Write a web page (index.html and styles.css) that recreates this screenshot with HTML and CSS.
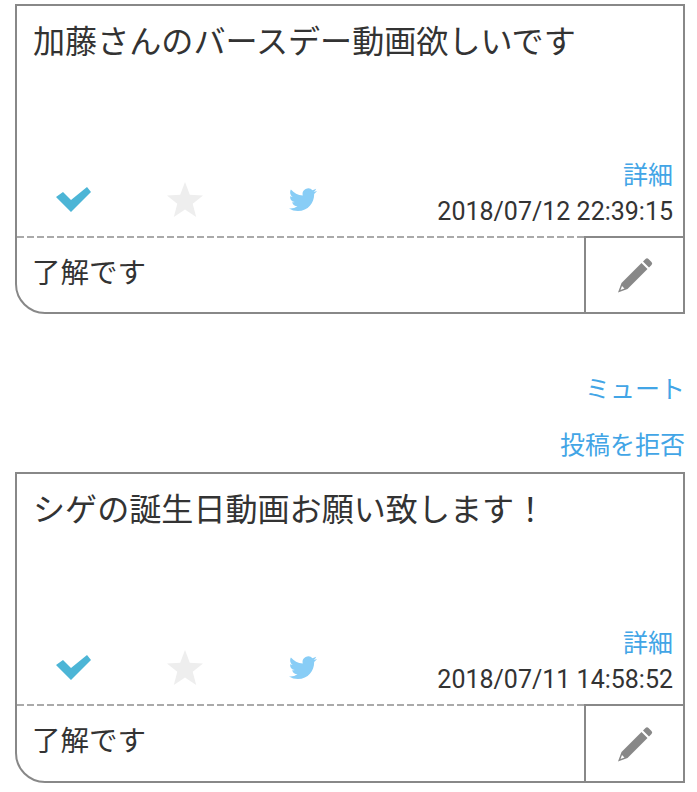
FILE: index.html
```html
<!DOCTYPE html>
<html lang="ja">
<head>
  <meta charset="UTF-8" />
  <meta name="viewport" content="width=device-width, initial-scale=1.0"/>
  <title>リクエスト一覧</title>
  <link rel="stylesheet" href="styles.css">
</head>
<body>
  <div class="card">
    <div class="card-main">
      <p class="message">加藤さんのバースデー動画欲しいです</p>
      <div class="meta">
        <div class="icons">
          <span class="icon-cell">
            <svg width="35" height="25" viewBox="0 0 35 25"><path class="check" d="M0 10 L7 5 L15 13 L31 0 L35 5 L15 25 Z"/></svg>
          </span>
          <span class="icon-cell">
            <svg width="36" height="35" viewBox="0 0 36 35"><path class="star" d="M18 0 L22.800 12.700 L36 13.400 L25.700 21.800 L29.200 35 L18 27.600 L6.800 35 L10.300 21.800 L0 13.400 L13.200 12.700 Z"/></svg>
          </span>
          <span class="icon-cell">
            <svg width="28" height="24" viewBox="0 0 24 20.500"><path class="bird" d="M23.953 2.570a10 10 0 0 1-2.825.775 4.958 4.958 0 0 0 2.163-2.723c-.951.555-2.005.959-3.127 1.184a4.920 4.920 0 0 0-8.384 4.482C7.690 6.095 4.067 4.130 1.640 1.162a4.822 4.822 0 0 0-.666 2.475c0 1.710.870 3.213 2.188 4.096a4.904 4.904 0 0 1-2.228-.616v.060a4.923 4.923 0 0 0 3.946 4.827 4.996 4.996 0 0 1-2.212.085 4.936 4.936 0 0 0 4.604 3.417 9.867 9.867 0 0 1-6.102 2.105c-.390 0-.779-.023-1.170-.067a13.995 13.995 0 0 0 7.557 2.209c9.053 0 13.998-7.496 13.998-13.985 0-.210 0-.420-.015-.630A9.935 9.935 0 0 0 24 2.590z"/></svg>
          </span>
        </div>
        <div class="info">
          <a class="detail" href="#">詳細</a>
          <span class="date">2018/07/12 22:39:15</span>
        </div>
      </div>
    </div>
    <div class="card-foot">
      <div class="reply">了解です</div>
      <div class="edit">
        <svg width="36" height="36" viewBox="0 0 36 36"><path class="pencil" fill-rule="evenodd" d="M26 4.500 L28.500 2 Q30 .500 31.500 2 L34.500 5 Q36 6.500 34.500 8 L32 10.500 Z M24.500 6 L30.500 12 L10.500 32 L1 35.500 L4.500 26 Z M5 29 L3.500 33 L7.500 31.500 Z"/></svg>
      </div>
    </div>
  </div>

  <div class="actions">
    <a href="#">ミュート</a>
    <a href="#">投稿を拒否</a>
  </div>

  <div class="card card-last">
    <div class="card-main">
      <p class="message">シゲの誕生日動画お願い致します！</p>
      <div class="meta">
        <div class="icons">
          <span class="icon-cell">
            <svg width="35" height="25" viewBox="0 0 35 25"><path class="check" d="M0 10 L7 5 L15 13 L31 0 L35 5 L15 25 Z"/></svg>
          </span>
          <span class="icon-cell">
            <svg width="36" height="35" viewBox="0 0 36 35"><path class="star" d="M18 0 L22.800 12.700 L36 13.400 L25.700 21.800 L29.200 35 L18 27.600 L6.800 35 L10.300 21.800 L0 13.400 L13.200 12.700 Z"/></svg>
          </span>
          <span class="icon-cell">
            <svg width="28" height="24" viewBox="0 0 24 20.500"><path class="bird" d="M23.953 2.570a10 10 0 0 1-2.825.775 4.958 4.958 0 0 0 2.163-2.723c-.951.555-2.005.959-3.127 1.184a4.920 4.920 0 0 0-8.384 4.482C7.690 6.095 4.067 4.130 1.640 1.162a4.822 4.822 0 0 0-.666 2.475c0 1.710.870 3.213 2.188 4.096a4.904 4.904 0 0 1-2.228-.616v.060a4.923 4.923 0 0 0 3.946 4.827 4.996 4.996 0 0 1-2.212.085 4.936 4.936 0 0 0 4.604 3.417 9.867 9.867 0 0 1-6.102 2.105c-.390 0-.779-.023-1.170-.067a13.995 13.995 0 0 0 7.557 2.209c9.053 0 13.998-7.496 13.998-13.985 0-.210 0-.420-.015-.630A9.935 9.935 0 0 0 24 2.590z"/></svg>
          </span>
        </div>
        <div class="info">
          <a class="detail" href="#">詳細</a>
          <span class="date">2018/07/11 14:58:52</span>
        </div>
      </div>
    </div>
    <div class="card-foot">
      <div class="reply">了解です</div>
      <div class="edit">
        <svg width="36" height="36" viewBox="0 0 36 36"><path class="pencil" fill-rule="evenodd" d="M26 4.500 L28.500 2 Q30 .500 31.500 2 L34.500 5 Q36 6.500 34.500 8 L32 10.500 Z M24.500 6 L30.500 12 L10.500 32 L1 35.500 L4.500 26 Z M5 29 L3.500 33 L7.500 31.500 Z"/></svg>
      </div>
    </div>
  </div>
</body>
</html>
```

FILE: styles.css
```css
body {
  margin: 0;
  padding: 4px 12px 0 15px;
  background-color: white;
  color: #333;
  font-family: Roboto, 'Noto Sans CJK JP', sans-serif;
}

a {
  color: #42a5e6;
  text-decoration: none;
}

.card {
  height: 310px;
  box-sizing: border-box;
  display: flex;
  flex-direction: column;
  background: white;
  border: 2px solid #888;
  border-bottom-left-radius: 30px;
}

.card-last {
  height: 311px;
}

.card-main {
  height: 230px;
  box-sizing: border-box;
  display: flex;
  flex-direction: column;
  justify-content: space-between;
  padding: 12px 10px 7px 0;
}

.message {
  margin: 0;
  padding-left: 16px;
  font-size: 32.1px;
  line-height: 48px;
}

.meta {
  display: flex;
  justify-content: space-between;
  align-items: flex-end;
}

.icons {
  display: grid;
  grid-template-columns: 112px 112px 124px;
  align-items: center;
  padding-bottom: 12px;
}

.icon-cell {
  display: flex;
  justify-content: center;
}

.check { fill: #4cb5d6; }
.star { fill: #eeeeee; }
.bird { fill: #88cdf6; }
.pencil { fill: #888; }

.info {
  display: flex;
  flex-direction: column;
  align-items: flex-end;
  gap: 2px;
}

.detail {
  font-size: 25px;
  line-height: 34px;
}

.date {
  font-size: 25px;
  line-height: 34px;
}

.card-foot {
  flex: 1;
  display: flex;
}

.reply {
  flex: 1;
  padding: 2px 0 0 15px;
  background: repeating-linear-gradient(90deg, #aaa 0 7px, transparent 7px 10px) top / 100% 2px no-repeat;
  font-size: 28.5px;
  line-height: 72px;
}

.edit {
  width: 99px;
  box-sizing: border-box;
  display: flex;
  align-items: center;
  justify-content: center;
  border-top: 2px solid #888;
  border-left: 2px solid #888;
}

.actions {
  display: flex;
  flex-direction: column;
  align-items: flex-end;
  gap: 20px;
  padding-top: 58px;
  margin-bottom: 8px;
}

.actions a {
  font-size: 25px;
  line-height: 36px;
}
```
